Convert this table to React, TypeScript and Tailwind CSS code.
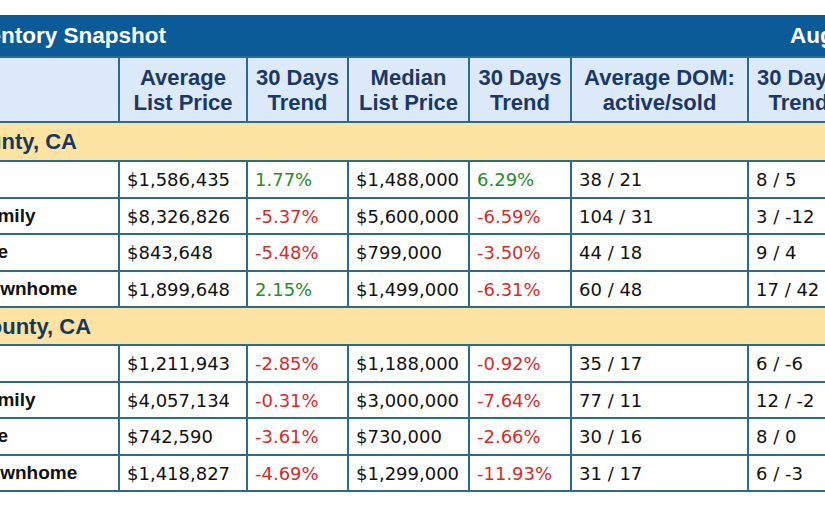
import React from "react";

type Row = {
  label: string;
  avg: string;
  t1: string;
  med: string;
  t2: string;
  dom: string;
  t3: string;
};

const sections: { name: string; pad: string; rows: Row[] }[] = [
  {
    name: "Marin County, CA",
    pad: "pl-[12px]",
    rows: [
      { label: "Overall", avg: "$1,586,435", t1: "1.77%", med: "$1,488,000", t2: "6.29%", dom: "38 / 21", t3: "8 / 5" },
      { label: "Single Family", avg: "$8,326,826", t1: "-5.37%", med: "$5,600,000", t2: "-6.59%", dom: "104 / 31", t3: "3 / -12" },
      { label: "Residence", avg: "$843,648", t1: "-5.48%", med: "$799,000", t2: "-3.50%", dom: "44 / 18", t3: "9 / 4" },
      { label: "Condo/Townhome", avg: "$1,899,648", t1: "2.15%", med: "$1,499,000", t2: "-6.31%", dom: "60 / 48", t3: "17 / 42" },
    ],
  },
  {
    name: "Napa County, CA",
    pad: "pl-[31px]",
    rows: [
      { label: "Overall", avg: "$1,211,943", t1: "-2.85%", med: "$1,188,000", t2: "-0.92%", dom: "35 / 17", t3: "6 / -6" },
      { label: "Single Family", avg: "$4,057,134", t1: "-0.31%", med: "$3,000,000", t2: "-7.64%", dom: "77 / 11", t3: "12 / -2" },
      { label: "Residence", avg: "$742,590", t1: "-3.61%", med: "$730,000", t2: "-2.66%", dom: "30 / 16", t3: "8 / 0" },
      { label: "Condo/Townhome", avg: "$1,418,827", t1: "-4.69%", med: "$1,299,000", t2: "-11.93%", dom: "31 / 17", t3: "6 / -3" },
    ],
  },
];

function Trend({ v }: { v: string }) {
  const neg = v.startsWith("-");
  return neg ? (
    <td className="border-2 border-[#2d6b8a] pl-[7px] font-[DejaVu_Sans,Verdana,sans-serif] text-[18px] text-[#d52b2b] whitespace-nowrap">{v}</td>
  ) : (
    <td className="border-2 border-[#2d6b8a] pl-[7px] font-[DejaVu_Sans,Verdana,sans-serif] text-[18px] text-[#2a8a2a] whitespace-nowrap">{v}</td>
  );
}

function Val({ v }: { v: string }) {
  return (
    <td className="border-2 border-[#2d6b8a] pl-[7px] font-[DejaVu_Sans,Verdana,sans-serif] text-[18px] text-[#111] whitespace-nowrap">{v}</td>
  );
}

export default function App() {
  const headers = [
    ["Average", "List Price"],
    ["30 Days", "Trend"],
    ["Median", "List Price"],
    ["30 Days", "Trend"],
    ["Average DOM:", "active/sold"],
    ["30 Days", "Trend"],
  ];
  return (
    <div className="w-[825px] h-[510px] overflow-hidden bg-white pt-[15px] font-[Liberation_Sans,Arial,sans-serif]">
      <div className="ml-[-120px] w-[968px]">
        <div className="h-[41px] bg-[#0b5b98] flex items-center text-white font-bold text-[22.5px]">
          <div className="w-[910px] shrink-0 pl-[76px] whitespace-nowrap">Inventory Snapshot</div>
          <div className="shrink-0 whitespace-nowrap">August 2019</div>
        </div>
        <table className="w-[968px] table-fixed border-collapse">
          <colgroup>
            <col className="w-[238px]" />
            <col className="w-[128px]" />
            <col className="w-[101px]" />
            <col className="w-[121px]" />
            <col className="w-[102px]" />
            <col className="w-[177px]" />
            <col className="w-[101px]" />
          </colgroup>
          <thead>
            <tr className="h-[65px] bg-[#dce9f8]">
              <th className="border-2 border-[#2d6b8a]" />
              {headers.map((h, i) => (
                <th
                  key={i}
                  className="border-2 border-[#2d6b8a] text-center font-bold text-[22px] leading-[25px] text-[#1b3865] whitespace-nowrap"
                >
                  {h[0]}
                  <br />
                  {h[1]}
                </th>
              ))}
            </tr>
          </thead>
          <tbody>
            {sections.map((s, si) => (
              <React.Fragment key={si}>
                <tr className={si === 0 ? "h-[39px]" : "h-[38px]"}>
                  <td
                    colSpan={7}
                    className={`border-2 border-[#2d6b8a] bg-[#fde3a1] font-bold text-[22px] text-[#17375e] whitespace-nowrap ${s.pad}`}
                  >
                    {s.name}
                  </td>
                </tr>
                {s.rows.map((r, ri) => (
                  <tr key={ri} className={ri % 2 === 0 ? "h-[37px]" : "h-[36px]"}>
                    <td className="border-2 border-[#2d6b8a] pl-[31px] font-bold text-[19px] text-[#111] whitespace-nowrap">
                      {r.label}
                    </td>
                    <Val v={r.avg} />
                    <Trend v={r.t1} />
                    <Val v={r.med} />
                    <Trend v={r.t2} />
                    <Val v={r.dom} />
                    <Val v={r.t3} />
                  </tr>
                ))}
              </React.Fragment>
            ))}
          </tbody>
        </table>
      </div>
    </div>
  );
}
